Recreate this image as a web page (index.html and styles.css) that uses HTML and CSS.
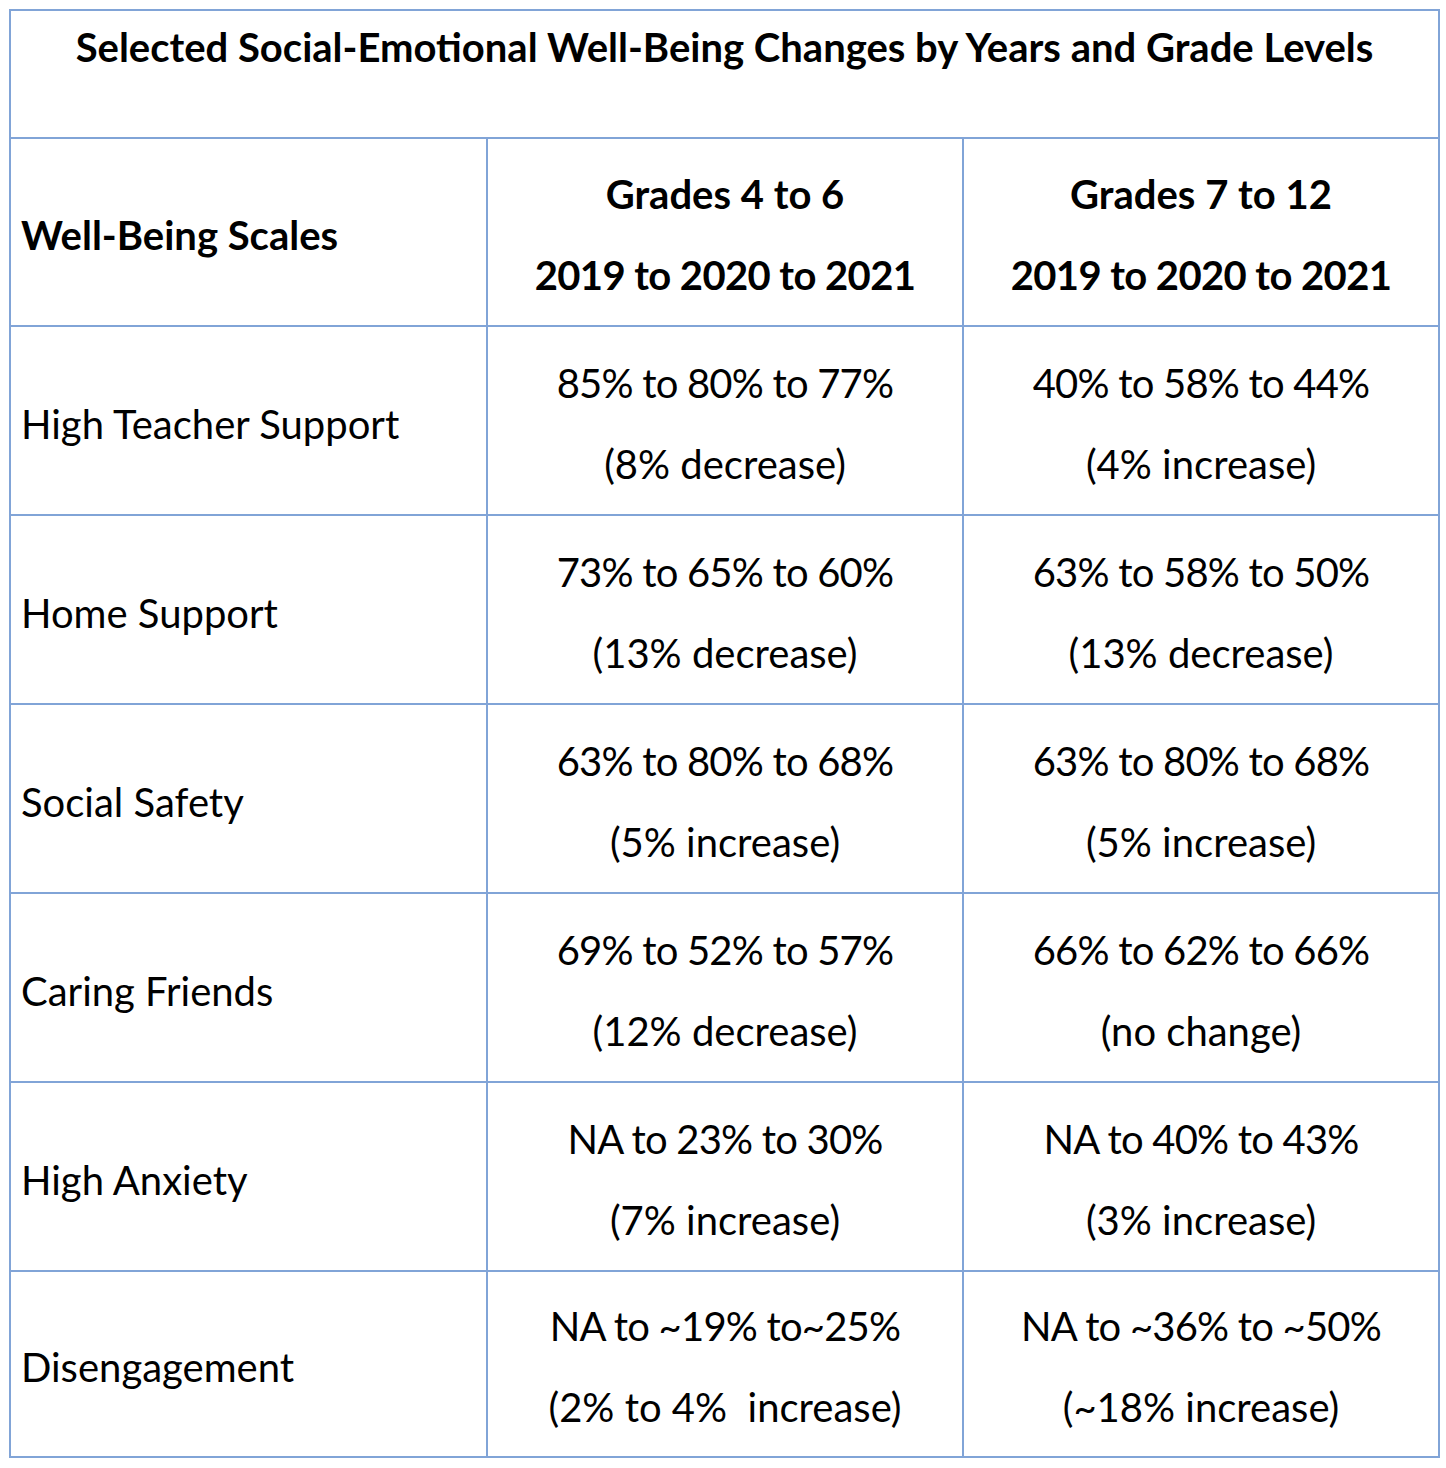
FILE: index.html
```html
<!DOCTYPE html>
<html>
<head>
<meta charset="utf-8">
<link rel="stylesheet" href="styles.css">
</head>
<body>
<table class="wb">
  <colgroup>
    <col class="c1"><col class="c2"><col class="c3">
  </colgroup>
  <tr class="title-row">
    <td colspan="3" class="title"><div class="title-text">Selected Social-Emotional Well-Being Changes by Years and Grade Levels</div></td>
  </tr>
  <tr class="head-row">
    <td class="label head"><div class="inner">Well-Being Scales</div></td>
    <td class="val head"><div class="inner"><div>Grades 4 to 6</div><div class="num">2019 to 2020 to 2021</div></div></td>
    <td class="val head"><div class="inner"><div>Grades 7 to 12</div><div class="num">2019 to 2020 to 2021</div></div></td>
  </tr>
  <tr class="row">
    <td class="label">High Teacher Support</td>
    <td class="val"><div class="num">85% to 80% to 77%</div><div>(8% decrease)</div></td>
    <td class="val"><div class="num">40% to 58% to 44%</div><div>(4% increase)</div></td>
  </tr>
  <tr class="row">
    <td class="label">Home Support</td>
    <td class="val"><div class="num">73% to 65% to 60%</div><div>(13% decrease)</div></td>
    <td class="val"><div class="num">63% to 58% to 50%</div><div>(13% decrease)</div></td>
  </tr>
  <tr class="row">
    <td class="label">Social Safety</td>
    <td class="val"><div class="num">63% to 80% to 68%</div><div>(5% increase)</div></td>
    <td class="val"><div class="num">63% to 80% to 68%</div><div>(5% increase)</div></td>
  </tr>
  <tr class="row">
    <td class="label">Caring Friends</td>
    <td class="val"><div class="num">69% to 52% to 57%</div><div>(12% decrease)</div></td>
    <td class="val"><div class="num">66% to 62% to 66%</div><div>(no change)</div></td>
  </tr>
  <tr class="row">
    <td class="label">High Anxiety</td>
    <td class="val"><div class="num">NA to 23% to 30%</div><div>(7% increase)</div></td>
    <td class="val"><div class="num">NA to 40% to 43%</div><div>(3% increase)</div></td>
  </tr>
  <tr class="row last">
    <td class="label">Disengagement</td>
    <td class="val"><div class="num">NA to ~19% to~25%</div><div>(2% to 4%&nbsp; increase)</div></td>
    <td class="val"><div class="num">NA to ~36% to ~50%</div><div>(~18% increase)</div></td>
  </tr>
</table>
</body>
</html>
```
FILE: styles.css
```css
html, body {
  margin: 0;
  background: #ffffff;
}
body {
  padding: 9px 0 0 9px;
  font-family: Lato, "Liberation Sans", sans-serif;
  color: #000;
}
.wb {
  border-collapse: collapse;
  table-layout: fixed;
  width: 1429px;
}
.c1 { width: 477px; }
.c2 { width: 476px; }
.c3 { width: 476px; }
.wb td {
  border: 2px solid #81a4d7;
  padding: 0;
}
.title-row td { height: 126px; }
.title {
  font-weight: 700;
  font-size: 40px;
  text-align: center;
  vertical-align: top;
}
.title-text {
  margin-top: 12px;
  line-height: 48px;
}
.head-row td { height: 186px; }
.row td {
  height: 181px;
  padding-top: 6px;
}
.row.last td { height: 178px; }
.label {
  font-size: 40px;
  line-height: 48px;
  padding-left: 10px !important;
  vertical-align: middle;
}
.val {
  font-size: 40px;
  text-align: center;
  vertical-align: middle;
}
.val div {
  line-height: 81px;
}
.val .num {
  letter-spacing: -0.8px;
}
.head {
  font-weight: 700;
}
.head .inner {
  padding-top: 6px;
}
.head .num {
  letter-spacing: -0.6px;
}
.val .inner div {
  line-height: 81px;
}
```
